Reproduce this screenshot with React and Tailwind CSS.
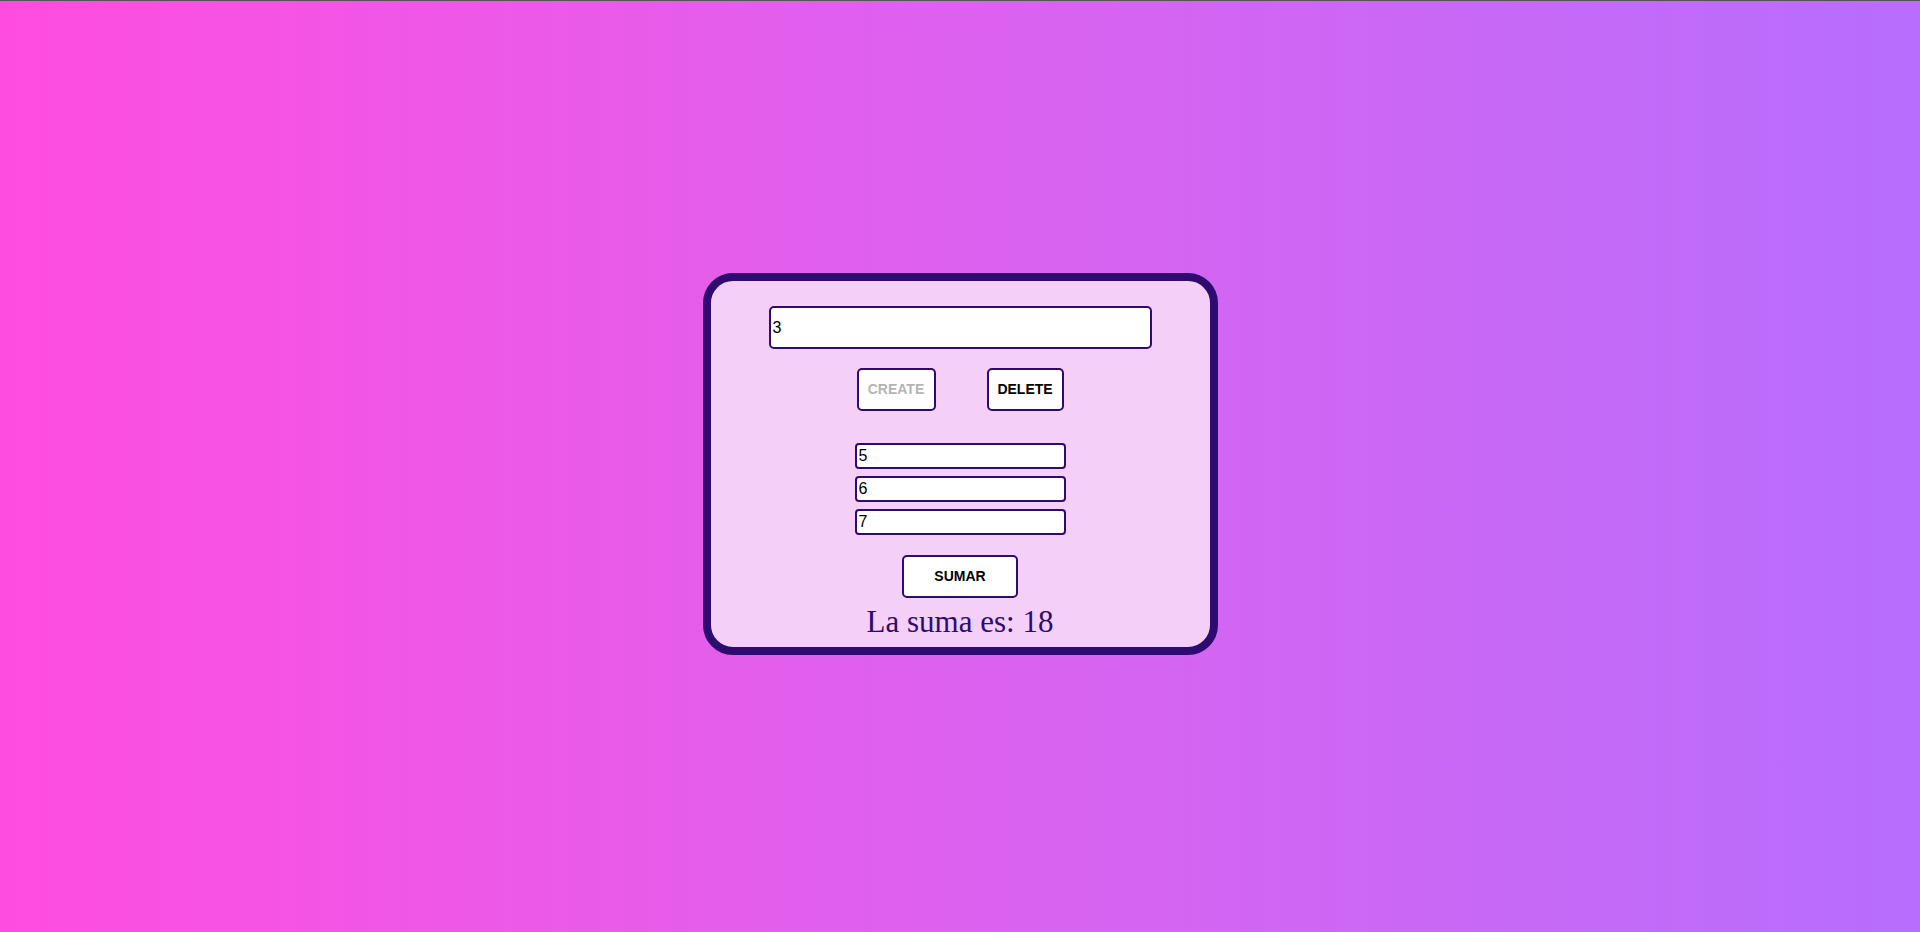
import React from "react";

export default function App() {
  return (
    <div className="min-h-screen w-full border-t border-[#555555] bg-gradient-to-r from-[#ff4ce0] to-[#b76dfd] flex items-center justify-center" style={{ fontFamily: '"Liberation Sans", Arial, sans-serif' }}>
      <div className="mb-[5px] w-[515px] border-8 border-[#2e0b6e] rounded-[30px] bg-[#f4d0f9] flex flex-col items-center pt-[25px] pb-[7px]">
        <input
          type="text"
          defaultValue="3"
          className="w-[383px] h-[43px] border-2 border-[#2e0b6e] rounded-[5px] bg-white px-[2px] text-[16px] text-black outline-none"
        />
        <div className="flex gap-[51px] mt-[19px]">
          <button className="w-[79px] h-[43px] border-2 border-[#2e0b6e] rounded-[5px] bg-white text-[14px] font-bold text-[#b4b4b4]">
            CREATE
          </button>
          <button className="w-[77px] h-[43px] border-2 border-[#2e0b6e] rounded-[5px] bg-white text-[14px] font-bold text-black">
            DELETE
          </button>
        </div>
        <div className="flex flex-col gap-[7px] mt-[32px]">
          {["5", "6", "7"].map((v) => (
            <input
              key={v}
              type="text"
              defaultValue={v}
              className="w-[211px] h-[26px] border-2 border-[#2e0b6e] rounded-[4px] bg-white px-[2px] text-[16px] text-black outline-none"
            />
          ))}
        </div>
        <button className="mt-[20px] w-[116px] h-[43px] border-2 border-[#2e0b6e] rounded-[5px] bg-white text-[14px] font-bold text-black">
          SUMAR
        </button>
        <div className="mt-[6px] text-[31px] leading-[36px] text-[#2e0b6e]" style={{ fontFamily: '"Liberation Serif", "Times New Roman", serif' }}>
          La suma es: 18
        </div>
      </div>
    </div>
  );
}
